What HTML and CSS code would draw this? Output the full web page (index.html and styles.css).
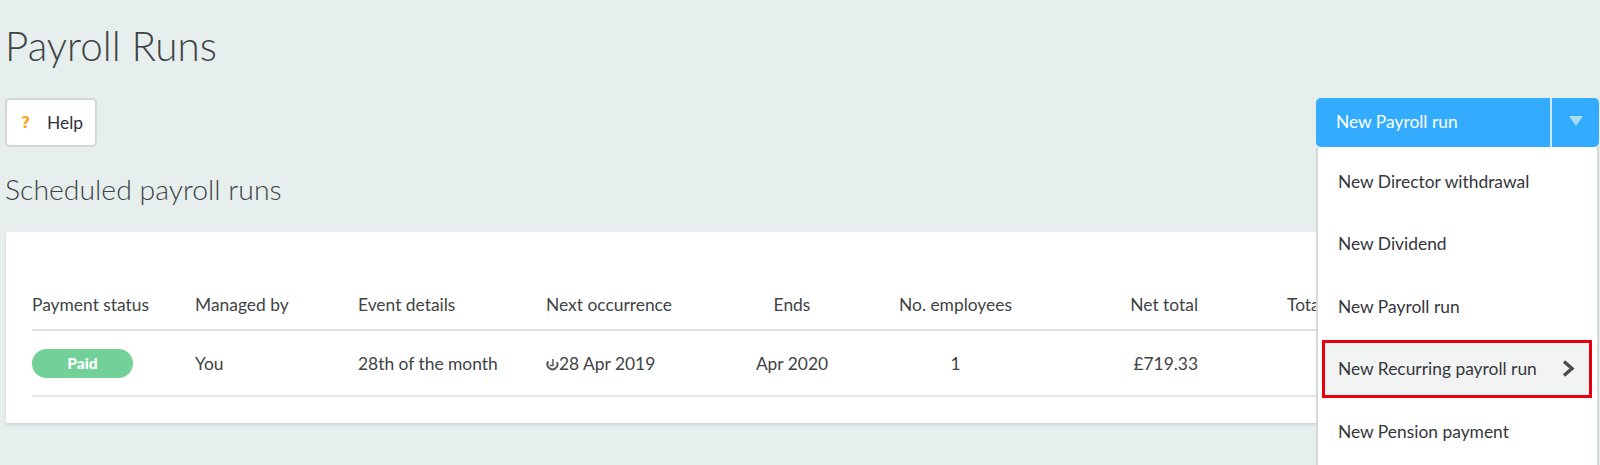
FILE: index.html
```html
<!DOCTYPE html>
<html lang="en">
<head>
    <meta charset="UTF-8">
    <title>Payroll Runs</title>
    <link rel="stylesheet" href="styles.css">
</head>
<body>
    <div class="page">
        <h1>Payroll Runs</h1>

        <div class="toolbar">
            <button class="help-btn"><span class="help-mark">?</span>Help</button>
            <div class="split-wrap">
                <div class="split-btn">
                    <span class="split-label">New Payroll run</span>
                    <span class="split-arrow"><span class="triangle"></span></span>
                </div>
                <ul class="split-menu">
                    <li>New Director withdrawal</li>
                    <li>New Dividend</li>
                    <li>New Payroll run</li>
                    <li class="marked">New Recurring payroll run
                        <svg class="chevron" width="13" height="17" viewBox="0 0 13 17"><path d="M2 1.5 L10 8.5 L2 15.5" fill="none" stroke="#4a4d4f" stroke-width="3.4"/></svg>
                    </li>
                    <li>New Pension payment</li>
                </ul>
            </div>
        </div>

        <h2>Scheduled payroll runs</h2>

        <div class="card">
            <div class="row head">
                <div>Payment status</div>
                <div>Managed by</div>
                <div>Event details</div>
                <div>Next occurrence</div>
                <div class="center">Ends</div>
                <div class="center">No. employees</div>
                <div class="right">Net total</div>
                <div class="total">Total</div>
            </div>
            <div class="row">
                <div><span class="pill">Paid</span></div>
                <div>You</div>
                <div>28th of the month</div>
                <div class="next">
                    <svg class="repeat" width="13" height="13" viewBox="0 0 13 13"><path d="M2.4 3.4 A5 5 0 1 0 11 4.2" fill="none" stroke="#55585a" stroke-width="2"/><path d="M7 1 V7.6 H3.6" fill="none" stroke="#55585a" stroke-width="1.5"/></svg>28 Apr 2019
                </div>
                <div class="center">Apr 2020</div>
                <div class="center">1</div>
                <div class="right">£719.33</div>
                <div class="total"></div>
            </div>
        </div>
    </div>
</body>
</html>
```

FILE: styles.css
```css
* {
    box-sizing: border-box;
}
html, body {
    height: 100%;
}
body {
    margin: 0;
    overflow: hidden;
    background-color: #e6efee;
    color: #3f4345;
    font-family: "Lato", sans-serif;
    font-size: 17.4px;
}
.page {
    padding: 22px 1px 0 5px;
}
h1 {
    margin: 0;
    height: 76px;
    font-size: 40.4px;
    line-height: 48px;
    font-weight: 300;
}
h2 {
    margin: 0;
    height: 85px;
    padding-top: 25px;
    font-size: 28.4px;
    line-height: 34px;
    font-weight: 300;
}
.toolbar {
    display: flex;
    justify-content: space-between;
    align-items: flex-start;
    height: 49px;
}
.help-btn {
    display: flex;
    align-items: center;
    width: 92px;
    height: 49px;
    padding: 0 0 0 14px;
    background: #fff;
    border: 2px solid #d3d7d8;
    border-radius: 5px;
    color: #2f3040;
    font-family: inherit;
    font-size: 17.4px;
    text-align: left;
}
.help-mark {
    width: 26px;
    color: #f9a825;
    font-family: "DejaVu Sans", sans-serif;
    font-weight: 700;
    font-size: 16px;
}
.split-wrap {
    position: relative;
    width: 283px;
}
.split-btn {
    display: flex;
    height: 49px;
    background-color: #33acff;
    border-radius: 5px;
    color: #fff;
}
.split-label {
    flex: 1;
    padding-left: 20px;
    line-height: 48px;
    border-right: 2px solid #cfeaff;
}
.split-arrow {
    display: flex;
    align-items: center;
    justify-content: center;
    width: 47px;
}
.triangle {
    margin-top: -3px;
    border-left: 7px solid transparent;
    border-right: 7px solid transparent;
    border-top: 10px solid #a9dcef;
}
.split-menu {
    position: absolute;
    top: 49px;
    left: 0;
    right: 0;
    height: 340px;
    margin: 0;
    padding: 3px 0 0;
    list-style: none;
    background: #fff;
    border-left: 2px solid #d6d9da;
    border-right: 2px solid #d6d9da;
    color: #35363c;
}
.split-menu li {
    display: flex;
    align-items: center;
    height: 62.5px;
    padding-left: 20px;
}
.split-menu li.marked {
    justify-content: space-between;
    height: 58px;
    margin: 2px 5px 2.5px 4px;
    padding: 0 14px 0 13px;
    background-color: #f2f4f3;
    border: 3px solid #e8000f;
}
.card {
    margin-left: 1px;
    margin-right: 2px;
    height: 191px;
    padding-top: 45px;
    background: #fff;
    box-shadow: 0 2px 3px rgba(0, 0, 0, 0.1);
    overflow: hidden;
}
.row {
    display: grid;
    grid-template-columns: 163px 163px 188px 180px 132px 195px 145px 120px 1fr;
    align-items: center;
    height: 66px;
    margin-left: 26px;
    border-bottom: 2px solid #e4e6e6;
}
.row.head {
    height: 54px;
    padding-top: 2px;
    border-bottom-color: #dcdedf;
}
.center {
    text-align: center;
}
.right {
    text-align: right;
}
.total {
    padding-left: 89px;
    white-space: nowrap;
}
.pill {
    display: block;
    width: 101px;
    height: 29px;
    background-color: #71d198;
    border-radius: 15px;
    color: #fff;
    font-size: 15.5px;
    font-weight: 900;
    line-height: 28px;
    text-align: center;
}
.next {
    display: flex;
    align-items: center;
}
.repeat {
    margin-top: 2px;
}
```
